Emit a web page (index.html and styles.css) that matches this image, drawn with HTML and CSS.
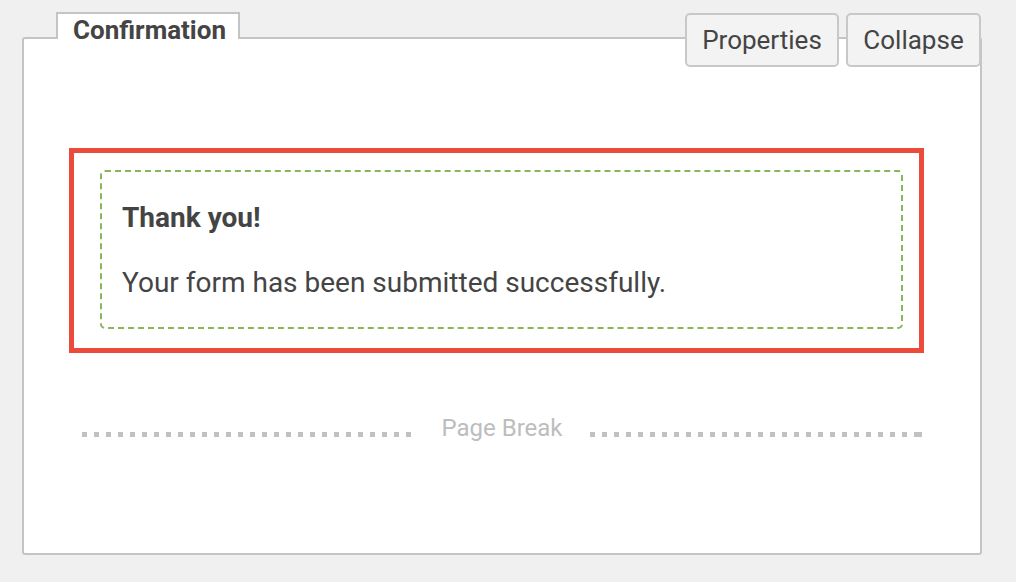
FILE: index.html
```html
<!DOCTYPE html>
<html>
<head>
<meta charset="utf-8">
<link rel="stylesheet" href="styles.css">
</head>
<body>
<div class="card">
  <div class="card-head">
    <div class="tab">Confirmation</div>
    <div class="actions">
      <button class="btn btn-props">Properties</button>
      <button class="btn btn-collapse">Collapse</button>
    </div>
  </div>
  <div class="card-body">
    <div class="highlight">
      <div class="message">
        <p class="msg-title">Thank you!</p>
        <p class="msg-text">Your form has been submitted successfully.</p>
      </div>
    </div>
    <div class="page-break">
      <span class="dots"></span>
      <span class="pb-label">Page Break</span>
      <span class="dots dots-end"></span>
    </div>
  </div>
</div>
</body>
</html>
```

FILE: styles.css
```css
html, body {
  margin: 0;
  padding: 0;
  background: #f0f0f0;
  font-family: Roboto, "Liberation Sans", Arial, sans-serif;
  color: #444;
}

.card {
  margin: 12px 0 0 22px;
  width: 960px;
}

.card-head {
  position: relative;
  z-index: 1;
  display: flex;
  align-items: flex-start;
  height: 25px;
}

.tab {
  box-sizing: border-box;
  margin-left: 34px;
  width: 184px;
  height: 27px;
  border: 2px solid #c4c4c4;
  border-bottom: none;
  background: #fff;
  font-weight: 700;
  font-size: 26px;
  line-height: 26px;
  padding: 3px 0 0 15px;
  white-space: nowrap;
}

.actions {
  margin-left: auto;
  margin-right: 1px;
  margin-top: 1px;
  display: flex;
  gap: 7px;
}

.btn {
  box-sizing: border-box;
  height: 54px;
  border: 2px solid #c8c8c8;
  border-radius: 5px;
  background: #f3f3f3;
  color: #444;
  font-family: Roboto, "Liberation Sans", Arial, sans-serif;
  font-size: 26px;
  padding: 0;
  line-height: 50px;
}

.btn-props { width: 154px; }
.btn-collapse { width: 135px; }

.card-body {
  box-sizing: border-box;
  height: 518px;
  border: 2px solid #c4c4c4;
  border-radius: 3px;
  background: #fff;
  padding-top: 109px;
}

.highlight {
  box-sizing: border-box;
  margin-left: 45px;
  width: 855px;
  height: 205px;
  border: 5px solid #ea4b3b;
  padding: 17px 0 0 26px;
}

.message {
  box-sizing: border-box;
  width: 803px;
  height: 159px;
  border: 2px dashed #88b659;
  border-radius: 5px;
  padding: 31px 0 0 20px;
}

.message p {
  margin: 0;
  line-height: 30px;
}

.msg-title {
  font-weight: 700;
  font-size: 28px;
}

.msg-text {
  margin-top: 35px !important;
  font-size: 28px;
}

.page-break {
  margin: 60px 0 0 58px;
  width: 840px;
  height: 30px;
  display: flex;
  align-items: center;
}

.dots {
  flex: 1;
  height: 5px;
  margin-top: 12px;
  background: repeating-linear-gradient(to right, #c1c1c1 0 5px, transparent 5px 12px);
}

.dots-end {
  background:
    linear-gradient(#c1c1c1, #c1c1c1) right / 8px 5px no-repeat,
    repeating-linear-gradient(to right, #c1c1c1 0 5px, transparent 5px 12px) left / calc(100% - 12px) 5px no-repeat;
}

.pb-label {
  margin: 0 27px;
  font-size: 24px;
  color: #bdbdbd;
  line-height: 30px;
}
```
